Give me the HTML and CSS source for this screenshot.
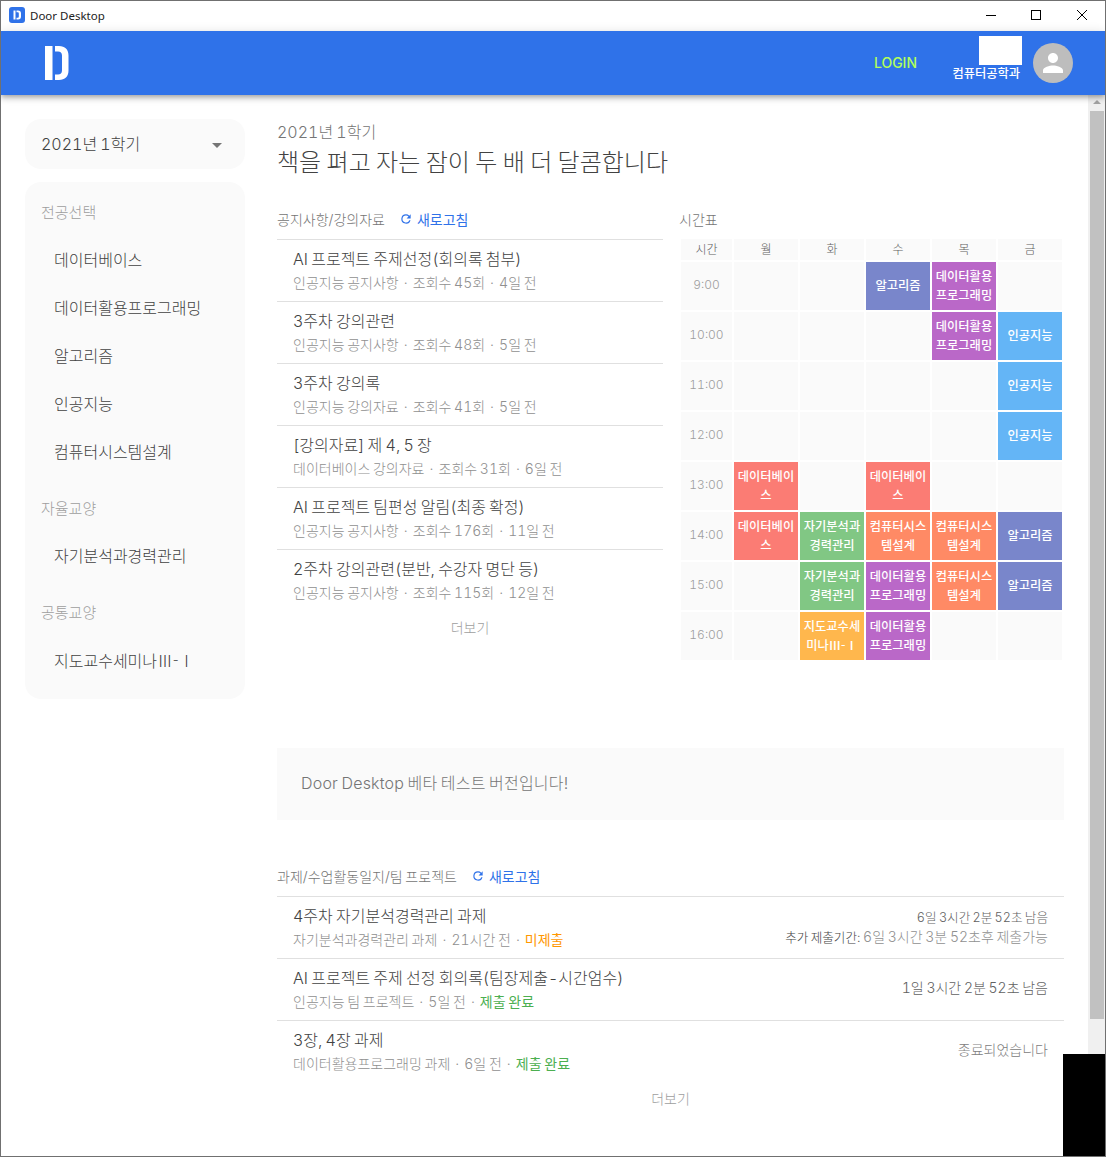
FILE: index.html
```html
<!DOCTYPE html>
<html lang="ko">
<head>
    <meta charset="UTF-8">
    <title>Door Desktop</title>
    <link rel="stylesheet" href="styles.css">
</head>
<body>
<div class="window">
    <div class="titlebar">
        <svg class="app-icon" width="16" height="16" viewBox="0 0 16 16">
            <rect width="16" height="16" rx="3" fill="#2f72e9"/>
            <path d="M4.500 3.500h2v9h-2zM7.500 3.500h1.500c2 0 3 1.200 3 3v3c0 1.800-1 3-3 3H7.500v-1.800h1c.9 0 1.300-.5 1.300-1.300V6.600c0-.8-.4-1.300-1.300-1.300h-1z" fill="#fff"/>
        </svg>
        <span class="app-name">Door Desktop</span>
        <div class="win-btns">
            <svg width="46" height="30" viewBox="0 0 46 30"><path d="M19 14.500h10" stroke="#000"/></svg>
            <svg width="46" height="30" viewBox="0 0 46 30"><rect x="18.500" y="9.500" width="9" height="9" fill="none" stroke="#000"/></svg>
            <svg width="46" height="30" viewBox="0 0 46 30"><path d="M18 9l10 10M28 9l-10 10" stroke="#000"/></svg>
        </div>
    </div>

    <header class="appbar">
        <svg class="logo" width="24" height="34" viewBox="0 0 24 34">
            <path d="M0 0h7.500v34H0zM10 0h4c6 0 9.500 3.500 9.500 9.500v15c0 6-3.500 9.500-9.500 9.500h-4v-5.500h3c2.500 0 4-1.300 4-4V9.500c0-2.700-1.500-4-4-4h-3z" fill="#fff"/>
        </svg>
        <a class="login">LOGIN</a>
        <div class="profile">
            <div class="photo"></div>
            <span class="dept">컴퓨터공학과</span>
        </div>
        <div class="avatar">
            <svg width="30" height="30" viewBox="0 0 24 24"><path d="M12 12c2.210 0 4-1.790 4-4s-1.790-4-4-4-4 1.790-4 4 1.790 4 4 4zm0 2c-2.670 0-8 1.340-8 4v2h16v-2c0-2.660-5.330-4-8-4z" fill="#fff"/></svg>
        </div>
    </header>

    <div class="body">
        <div class="page">
            <aside class="sidebar">
                <div class="semester">
                    <span>2021년 1학기</span>
                    <i class="caret"></i>
                </div>
                <nav class="courses">
                    <div class="group">전공선택</div>
                    <a>데이터베이스</a>
                    <a>데이터활용프로그래밍</a>
                    <a>알고리즘</a>
                    <a>인공지능</a>
                    <a>컴퓨터시스템설계</a>
                    <div class="group next">자율교양</div>
                    <a>자기분석과경력관리</a>
                    <div class="group next">공통교양</div>
                    <a class="numeral">지도교수세미나Ⅲ-Ⅰ</a>
                </nav>
            </aside>

            <main class="content">
                <div class="term">2021년 1학기</div>
                <h1>책을 펴고 자는 잠이 두 배 더 달콤합니다</h1>

                <div class="columns">
                    <section>
                        <div class="sec-head">
                            <span>공지사항/강의자료</span>
                            <a class="refresh"><svg width="14" height="14" viewBox="0 0 24 24"><path d="M17.650 6.350A7.960 7.960 0 0 0 12 4a8 8 0 1 0 7.730 10h-2.080A6 6 0 1 1 12 6c1.660 0 3.140.69 4.220 1.780L13 11h7V4z" fill="#2f72e9"/></svg>새로고침</a>
                        </div>
                        <ul class="list">
                            <li><b>AI 프로젝트 주제선정(회의록 첨부)</b><small>인공지능 공지사항<i class="dot">·</i>조회수 45회<i class="dot">·</i>4일 전</small></li>
                            <li><b>3주차 강의관련</b><small>인공지능 공지사항<i class="dot">·</i>조회수 48회<i class="dot">·</i>5일 전</small></li>
                            <li><b>3주차 강의록</b><small>인공지능 강의자료<i class="dot">·</i>조회수 41회<i class="dot">·</i>5일 전</small></li>
                            <li><b>[강의자료] 제 4, 5 장</b><small>데이터베이스 강의자료<i class="dot">·</i>조회수 31회<i class="dot">·</i>6일 전</small></li>
                            <li><b>AI 프로젝트 팀편성 알림(최종 확정)</b><small>인공지능 공지사항<i class="dot">·</i>조회수 176회<i class="dot">·</i>11일 전</small></li>
                            <li><b>2주차 강의관련(분반, 수강자 명단 등)</b><small>인공지능 공지사항<i class="dot">·</i>조회수 115회<i class="dot">·</i>12일 전</small></li>
                        </ul>
                        <div class="more">더보기</div>
                    </section>

                    <section>
                        <div class="sec-head"><span>시간표</span></div>
                        <table class="timetable">
                            <colgroup><col class="col-time"><col><col><col><col><col></colgroup>
                            <tr class="days"><th>시간</th><th>월</th><th>화</th><th>수</th><th>목</th><th>금</th></tr>
                            <tr><th>9:00</th><td></td><td></td><td class="algo">알고리즘</td><td class="data">데이터활용프로그래밍</td><td></td></tr>
                            <tr><th>10:00</th><td></td><td></td><td></td><td class="data">데이터활용프로그래밍</td><td class="ai">인공지능</td></tr>
                            <tr><th>11:00</th><td></td><td></td><td></td><td></td><td class="ai">인공지능</td></tr>
                            <tr><th>12:00</th><td></td><td></td><td></td><td></td><td class="ai">인공지능</td></tr>
                            <tr><th>13:00</th><td class="db">데이터베이스</td><td></td><td class="db">데이터베이스</td><td></td><td></td></tr>
                            <tr><th>14:00</th><td class="db">데이터베이스</td><td class="career">자기분석과경력관리</td><td class="sys">컴퓨터시스템설계</td><td class="sys">컴퓨터시스템설계</td><td class="algo">알고리즘</td></tr>
                            <tr><th>15:00</th><td></td><td class="career">자기분석과경력관리</td><td class="data">데이터활용프로그래밍</td><td class="sys">컴퓨터시스템설계</td><td class="algo">알고리즘</td></tr>
                            <tr><th>16:00</th><td></td><td class="semi numeral">지도교수세미나Ⅲ-Ⅰ</td><td class="data">데이터활용프로그래밍</td><td></td><td></td></tr>
                        </table>
                    </section>
                </div>

                <div class="notice">Door Desktop 베타 테스트 버전입니다!</div>

                <section class="tasks">
                    <div class="sec-head">
                        <span>과제/수업활동일지/팀 프로젝트</span>
                        <a class="refresh"><svg width="14" height="14" viewBox="0 0 24 24"><path d="M17.650 6.350A7.960 7.960 0 0 0 12 4a8 8 0 1 0 7.730 10h-2.080A6 6 0 1 1 12 6c1.660 0 3.140.69 4.220 1.780L13 11h7V4z" fill="#2f72e9"/></svg>새로고침</a>
                    </div>
                    <ul class="list">
                        <li>
                            <div><b>4주차 자기분석경력관리 과제</b><small>자기분석과경력관리 과제<i class="dot">·</i>21시간 전<i class="dot">·</i><em class="late">미제출</em></small></div>
                            <div class="due two"><span class="left-time">6일 3시간 2분 52초 남음</span><span class="extra"><span class="dark">추가 제출기간:</span> 6일 3시간 3분 52초후 제출가능</span></div>
                        </li>
                        <li>
                            <div><b>AI 프로젝트 주제 선정 회의록(팀장제출-시간엄수)</b><small>인공지능 팀 프로젝트<i class="dot">·</i>5일 전<i class="dot">·</i><em class="done">제출 완료</em></small></div>
                            <div class="due">1일 3시간 2분 52초 남음</div>
                        </li>
                        <li>
                            <div><b>3장, 4장 과제</b><small>데이터활용프로그래밍 과제<i class="dot">·</i>6일 전<i class="dot">·</i><em class="done">제출 완료</em></small></div>
                            <div class="due ended">종료되었습니다</div>
                        </li>
                    </ul>
                    <div class="more">더보기</div>
                </section>
            </main>
        </div>

        <div class="scrollbar">
            <i class="arrow"></i>
            <div class="thumb"></div>
        </div>
    </div>

    <div class="corner"></div>
</div>
</body>
</html>
```

FILE: styles.css
```css
* {
    box-sizing: border-box;
}

html, body {
    margin: 0;
    height: 100%;
    overflow: hidden;
}

body {
    font-family: Inter, "Noto Sans CJK KR", sans-serif;
    font-weight: 300;
    font-variant-numeric: tabular-nums;
    word-spacing: -.066em;
    color: #424242;
    background: #fff;
}

.window {
    position: relative;
    width: 1106px;
    height: 1157px;
    border: 1px solid #707070;
    display: flex;
    flex-direction: column;
    overflow: hidden;
}

/* title bar */
.titlebar {
    height: 30px;
    flex: none;
    display: flex;
    align-items: center;
    padding-left: 8px;
    background: #fff;
}

.app-icon {
    margin-bottom: 2px;
}

.app-name {
    margin-left: 5px;
    padding-bottom: 2px;
    font-family: "Noto Sans", "Open Sans", sans-serif;
    font-size: 11.5px;
    font-weight: 400;
    word-spacing: 0;
    color: #222;
}

.win-btns {
    margin-left: auto;
    display: flex;
}

.win-btns svg {
    display: block;
}

/* blue bar */
.appbar {
    position: relative;
    z-index: 2;
    height: 64px;
    flex: none;
    display: flex;
    align-items: center;
    padding: 0 32px 0 44px;
    background: #2f72e9;
    box-shadow: 0 2px 4px -1px rgba(0, 0, 0, .2), 0 4px 5px 0 rgba(0, 0, 0, .14), 0 1px 10px 0 rgba(0, 0, 0, .12);
}

.login {
    margin-left: auto;
    padding-bottom: 2px;
    font-size: 14px;
    font-weight: 500;
    color: #b2ff59;
}

.profile {
    margin-left: 35px;
    width: 70px;
    height: 100%;
    padding-top: 5px;
    display: flex;
    flex-direction: column;
    align-items: flex-end;
}

.photo {
    width: 43px;
    height: 29px;
    background: #fff;
}

.dept {
    margin: 0 2px 0 0;
    font-size: 12.25px;
    font-weight: 500;
    line-height: 17px;
    color: #fff;
    white-space: nowrap;
}

.avatar {
    width: 40px;
    height: 40px;
    margin-left: 11px;
    border-radius: 50%;
    background: #bdbdbd;
    display: flex;
    align-items: center;
    justify-content: center;
}

/* page */
.body {
    flex: 1;
    min-height: 0;
    display: flex;
}

.page {
    flex: 1;
    min-width: 0;
    display: flex;
    align-items: flex-start;
    padding: 24px 24px 0;
    overflow: hidden;
}

.scrollbar {
    width: 17px;
    flex: none;
    background: #f0f0f0;
    padding-top: 5px;
    display: flex;
    flex-direction: column;
    align-items: center;
}

.arrow {
    width: 0;
    height: 0;
    border-left: 4px solid transparent;
    border-right: 4px solid transparent;
    border-bottom: 4px solid #a3a3a3;
}

.thumb {
    width: 14px;
    height: 908px;
    margin-top: 7px;
    background: #c1c1c1;
}

.corner {
    position: absolute;
    right: -1px;
    bottom: -1px;
    width: 43px;
    height: 103px;
    background: #000;
}

/* sidebar */
.sidebar {
    width: 220px;
    flex: none;
    margin-right: 32px;
}

.semester {
    height: 50px;
    padding: 0 16px 3px;
    border-radius: 16px;
    background: #fafafa;
    display: flex;
    align-items: center;
    justify-content: space-between;
    font-size: 16px;
}

.caret {
    width: 0;
    height: 0;
    border-left: 5px solid transparent;
    border-right: 5px solid transparent;
    border-top: 5px solid #757575;
    margin-right: 7px;
    margin-top: 6px;
}

.courses {
    margin-top: 13px;
    padding: 6px 0 15px;
    border-radius: 16px;
    background: #fafafa;
}

.group {
    height: 48px;
    padding-left: 16px;
    line-height: 50px;
    font-size: 15px;
    color: #9e9e9e;
}

.group.next {
    height: 56px;
    padding-top: 8px;
}

.courses a {
    display: block;
    height: 48px;
    line-height: 48px;
    padding-left: 29px;
    font-size: 16px;
    color: #424242;
}

.numeral {
    font-family: "Noto Sans CJK KR", sans-serif;
}

/* main column */
.content {
    width: 787px;
    flex: none;
    padding-top: 1px;
}

.term {
    font-size: 16px;
    line-height: 24px;
    color: #757575;
}

h1 {
    margin: 1px 0 0;
    font-size: 24px;
    font-weight: 300;
    line-height: 36px;
    color: #424242;
}

.columns {
    margin-top: 24px;
    display: flex;
    gap: 16px;
}

.columns section {
    width: 386px;
}

.columns section + section {
    width: 385px;
}

.sec-head {
    height: 30px;
    padding-bottom: 2px;
    display: flex;
    align-items: center;
    font-size: 14px;
    color: #757575;
}

.refresh {
    margin-left: 14px;
    display: flex;
    align-items: center;
    gap: 4px;
    color: #2f72e9;
    font-weight: 400;
}

.list {
    margin: 4px 0 0;
    padding: 0;
    list-style: none;
    border-top: 1px solid #e0e0e0;
}

.list li {
    height: 62px;
    padding: 7px 16px 0;
    border-bottom: 1px solid #e0e0e0;
    display: flex;
    flex-direction: column;
}

.tasks .list li {
    flex-direction: row;
    justify-content: space-between;
    align-items: flex-start;
}

.list li:last-child {
    border-bottom: 0;
}

.list b {
    display: block;
    font-size: 16px;
    font-weight: 300;
    line-height: 24px;
    color: #424242;
}

.list small {
    display: block;
    font-size: 14px;
    line-height: 24px;
    color: #909090;
}

.dot {
    display: inline-block;
    width: 14px;
    font-style: normal;
    text-align: center;
}

.list em {
    font-style: normal;
    font-weight: 400;
}

.late {
    color: #ff9800;
}

.done {
    color: #4caf50;
}

.more {
    height: 28px;
    margin-top: 2px;
    text-align: center;
    font-size: 14px;
    line-height: 28px;
    color: #9e9e9e;
}

/* timetable */
.timetable {
    table-layout: fixed;
    width: 385px;
    margin-top: 2px;
    border-spacing: 2px;
    border-collapse: separate;
    font-size: 12.25px;
}

.col-time {
    width: 51px;
}

.timetable th,
.timetable td {
    height: 48px;
    padding: 0 1px;
    background: #fafafa;
    text-align: center;
    word-break: break-all;
}

.timetable th {
    padding-bottom: 4px;
    font-size: 12px;
    font-weight: 300;
    color: #9e9e9e;
}

.timetable td {
    line-height: 19px;
    font-weight: 500;
    color: #fff;
}

.timetable .days th {
    height: 21px;
    padding-bottom: 2px;
    color: #616161;
}

.timetable .algo { background: #7986cb; padding-bottom: 2px; }
.timetable .data { background: #ba68c8; }
.timetable .ai { background: #64b5f6; padding-bottom: 2px; }
.timetable .db { background: #fb7c74; }
.timetable .career { background: #81c784; }
.timetable .sys { background: #ff8a65; }
.timetable .semi { background: #ffb74d; }

/* notice */
.notice {
    height: 72px;
    margin-top: 86px;
    padding: 0 0 4px 24px;
    background: #fafafa;
    display: flex;
    align-items: center;
    font-size: 16px;
    letter-spacing: .2px;
    color: #757575;
}

.tasks {
    margin-top: 42px;
}

.due {
    margin-top: 10px;
    text-align: right;
    font-size: 14px;
    line-height: 24px;
    color: #616161;
}

.due.two {
    margin-top: 4px;
}

.left-time,
.extra {
    display: block;
    line-height: 19px;
}

.left-time {
    font-size: 12.6px;
}

.extra {
    color: #909090;
}

.dark {
    font-size: 12.6px;
    color: #424242;
}

.ended {
    color: #808080;
}
```
